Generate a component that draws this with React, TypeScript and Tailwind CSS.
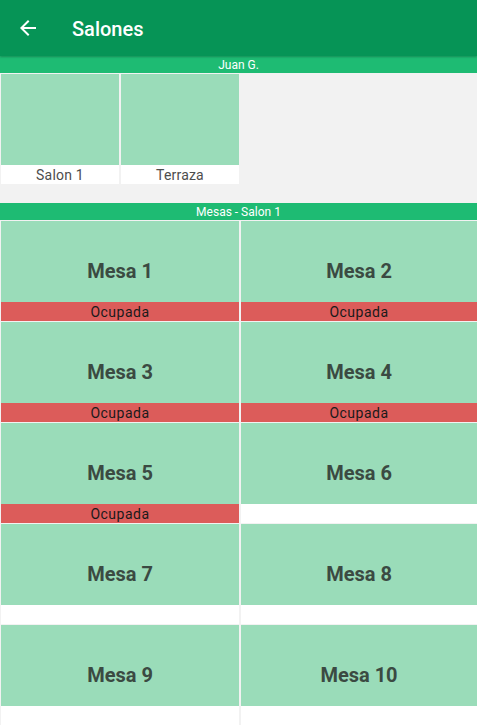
import React from 'react';

const salones = ['Salon 1', 'Terraza'];

const mesas = [
  { name: 'Mesa 1', ocupada: true },
  { name: 'Mesa 2', ocupada: true },
  { name: 'Mesa 3', ocupada: true },
  { name: 'Mesa 4', ocupada: true },
  { name: 'Mesa 5', ocupada: true },
  { name: 'Mesa 6', ocupada: false },
  { name: 'Mesa 7', ocupada: false },
  { name: 'Mesa 8', ocupada: false },
  { name: 'Mesa 9', ocupada: false },
  { name: 'Mesa 10', ocupada: false },
];

function SectionBar({ title }: { title: string }) {
  return (
    <div className="h-[17px] bg-[#1ebb73] text-white text-[12px] leading-[18px] text-center">
      {title}
    </div>
  );
}

export default function App() {
  return (
    <div
      className="w-[477px] h-[725px] overflow-hidden bg-[#f2f2f2]"
      style={{ fontFamily: 'Roboto, "Liberation Sans", sans-serif' }}
    >
      {/* Toolbar */}
      <div className="h-[56px] bg-[#069456] flex items-center relative z-10 shadow-[0_1px_2px_rgba(0,0,0,0.25)]">
        <div className="w-[56px] flex justify-center">
          <svg width="24" height="24" viewBox="0 0 24 24" fill="white">
            <path d="M20 11H7.83l5.59-5.59L12 4l-8 8 8 8 1.41-1.41L7.83 13H20v-2z" />
          </svg>
        </div>
        <h1 className="ml-[16px] mt-[2px] text-white text-[20px] font-medium">Salones</h1>
      </div>

      <SectionBar title="Juan G." />

      {/* Salones */}
      <div className="flex gap-[2px] pl-[1px] pt-[1px]">
        {salones.map((s) => (
          <div key={s} className="w-[118px] flex flex-col">
            <div className="h-[91px] bg-[#9adcb9]" />
            <div className="h-[19px] bg-white text-[14px] leading-[21px] tracking-[0.2px] text-center text-[#4d4d4d]">
              {s}
            </div>
          </div>
        ))}
      </div>

      <div className="h-[19px]" />

      <SectionBar title="Mesas - Salon 1" />

      {/* Mesas */}
      <div className="grid grid-cols-[238px_236px] gap-x-[2px] gap-y-[1px] pl-[1px] pt-[1px]">
        {mesas.map((m) => (
          <div key={m.name} className="h-[100px] flex flex-col">
            <div className="h-[81px] bg-[#9adcb9] flex items-center justify-center pt-[19px]">
              <span className="text-[20px] font-bold text-[#3b4a42]">{m.name}</span>
            </div>
            {m.ocupada ? (
              <div className="h-[19px] bg-[#dc5c5a] text-[14px] leading-[21px] tracking-[0.5px] text-center text-[#1a1a1a]">
                Ocupada
              </div>
            ) : (
              <div className="h-[19px] bg-white" />
            )}
          </div>
        ))}
      </div>
    </div>
  );
}
